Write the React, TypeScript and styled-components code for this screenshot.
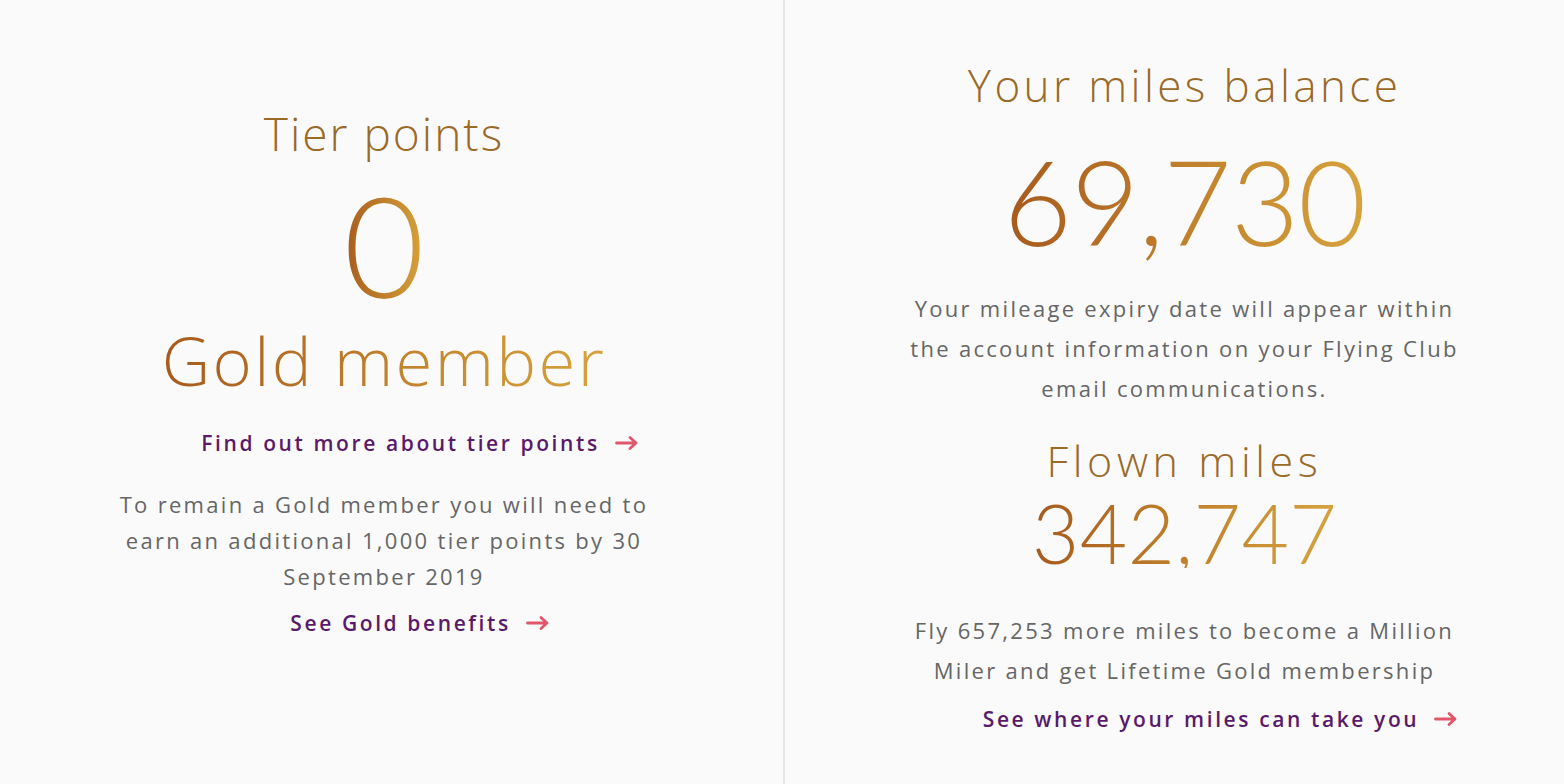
import React from "react";
import styled, { createGlobalStyle } from "styled-components";

const GlobalStyle = createGlobalStyle`
  html, body {
    margin: 0;
    padding: 0;
    background: #fafafa;
  }
  body {
    font-family: "Open Sans", "Liberation Sans", sans-serif;
    -webkit-font-smoothing: antialiased;
  }
`;

const Page = styled.main`
  display: flex;
  width: 1564px;
  height: 784px;
  background: #fafafa;
  overflow: hidden;
`;

const Column = styled.section<{ $padTop: number; $left?: boolean }>`
  display: flex;
  flex-direction: column;
  align-items: center;
  text-align: center;
  box-sizing: border-box;
  padding-top: ${(p) => p.$padTop}px;
  ${(p) =>
    p.$left
      ? `flex: 0 0 785px; padding-right: 15px; border-right: 2px solid #e6e6e6;`
      : `flex: 1 1 auto; padding-left: 20px;`}
`;

const Heading = styled.h2<{ $size: number; $lh: number; $mt?: number; $ls?: number }>`
  margin: ${(p) => p.$mt ?? 0}px 0 0;
  font-family: "Open Sans", sans-serif;
  font-weight: 300;
  font-size: ${(p) => p.$size}px;
  line-height: ${(p) => p.$lh}px;
  letter-spacing: ${(p) => p.$ls ?? 0}px;
  color: #9a6a28;
  white-space: nowrap;
`;

const GoldText = styled.div<{
  $size: number;
  $lh: number;
  $mt?: number;
  $ls?: number;
  $font?: string;
}>`
  display: inline-block;
  margin-top: ${(p) => p.$mt ?? 0}px;
  font-family: ${(p) => p.$font ?? `"Lato", sans-serif`};
  font-weight: 300;
  font-size: ${(p) => p.$size}px;
  line-height: ${(p) => p.$lh}px;
  letter-spacing: ${(p) => p.$ls ?? 0}px;
  white-space: nowrap;
  background: linear-gradient(90deg, #a65a1d 0%, #c0802c 50%, #d6a33d 100%);
  -webkit-background-clip: text;
  background-clip: text;
  color: transparent;
`;

const Body = styled.p<{ $lh: number; $mt: number }>`
  margin: ${(p) => p.$mt}px 0 0;
  font-family: "Open Sans", sans-serif;
  font-weight: 400;
  font-size: 22px;
  line-height: ${(p) => p.$lh}px;
  letter-spacing: 2.3px;
  color: #666666;
  white-space: nowrap;
`;

const LinkRow = styled.a<{ $mt: number }>`
  display: inline-flex;
  align-items: center;
  gap: 15px;
  margin-top: ${(p) => p.$mt}px;
  margin-left: 72px;
  font-family: "Open Sans", sans-serif;
  font-weight: 600;
  font-size: 21px;
  line-height: 30px;
  letter-spacing: 2.6px;
  color: #5a1a6b;
  text-decoration: none;
  white-space: nowrap;
  cursor: pointer;
`;

const ArrowSvg = styled.svg`
  width: 24px;
  height: 16px;
  flex: 0 0 auto;
`;

const Arrow = () => (
  <ArrowSvg viewBox="0 0 24 16" fill="none">
    <path
      d="M1.5 8H21M15 2.5L21 8L15 13.5"
      stroke="#e0566a"
      strokeWidth="2.8"
      strokeLinecap="round"
      strokeLinejoin="round"
    />
  </ArrowSvg>
);

export default function App() {
  return (
    <>
      <GlobalStyle />
      <Page>
        <Column $left $padTop={105}>
          <Heading $size={46} $lh={56} $ls={2}>Tier points</Heading>
          <GoldText $size={140} $lh={110} $mt={28}>0</GoldText>
          <GoldText $size={67} $lh={80} $mt={21} $ls={2.4} $font={`"Open Sans", sans-serif`}>
            Gold member
          </GoldText>
          <LinkRow $mt={28}>
            Find out more about tier points
            <Arrow />
          </LinkRow>
          <Body $lh={36} $mt={28}>
            To remain a Gold member you will need to
            <br />
            earn an additional 1,000 tier points by 30
            <br />
            September 2019
          </Body>
          <LinkRow $mt={14}>
            See Gold benefits
            <Arrow />
          </LinkRow>
        </Column>
        <Column $padTop={57}>
          <Heading $size={44} $lh={56} $ls={3.4}>Your miles balance</Heading>
          <GoldText $size={118} $lh={130} $mt={23} $ls={-1}>69,730</GoldText>
          <Body $lh={40} $mt={22}>
            Your mileage expiry date will appear within
            <br />
            the account information on your Flying Club
            <br />
            email communications.
          </Body>
          <Heading $size={43} $lh={48} $mt={29} $ls={4.6}>Flown miles</Heading>
          <GoldText $size={82} $lh={72} $mt={11} $ls={0.3}>342,747</GoldText>
          <Body $lh={40} $mt={42}>
            Fly 657,253 more miles to become a Million
            <br />
            Miler and get Lifetime Gold membership
          </Body>
          <LinkRow $mt={14}>
            See where your miles can take you
            <Arrow />
          </LinkRow>
        </Column>
      </Page>
    </>
  );
}
